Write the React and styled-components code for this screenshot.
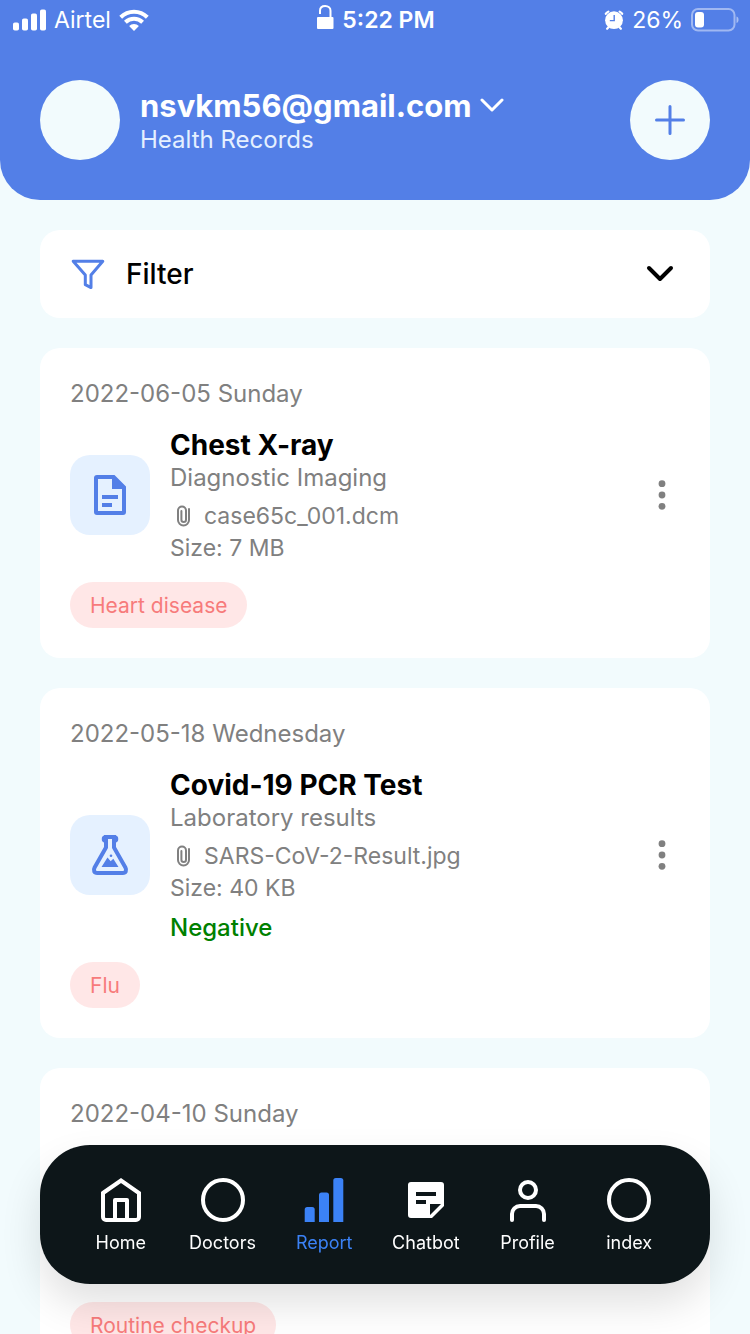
import React from 'react';
import styled, { createGlobalStyle } from 'styled-components';

const color = {
  primary: '#537fe7',
  active: '#3b82f6',
  page: '#f2fbfd',
  card: '#ffffff',
  muted: '#808080',
  iconTile: '#e5f1ff',
  tag: '#ffe7e7',
  tagText: '#f77b7b',
  positive: '#008000',
  nav: '#0d1619',
};

const GlobalStyle = createGlobalStyle`
  *, *::before, *::after { box-sizing: border-box; }
  body {
    margin: 0;
    background: ${color.page};
    font-family: Inter, "Liberation Sans", sans-serif;
    color: #000;
  }
  h1, h2, p { margin: 0; font: inherit; }
  button { border: 0; padding: 0; background: none; color: inherit; font: inherit; cursor: pointer; }
  svg { display: block; flex: none; }
`;

const Screen = styled.div`
  height: 100vh;
  display: flex;
  flex-direction: column;
  overflow: hidden;
`;

const Header = styled.header`
  flex: none;
  background: ${color.primary};
  color: #fff;
  border-radius: 0 0 40px 40px;
  padding-bottom: 40px;
`;

const StatusBar = styled.div`
  display: grid;
  grid-template-columns: 1fr auto 1fr;
  align-items: center;
  height: 40px;
  padding: 0 11px 0 13px;
  font-size: 23px;
  line-height: 40px;
`;

const StatusGroup = styled.div`
  display: flex;
  align-items: center;
  justify-content: ${(p) => p.$align || 'flex-start'};
  gap: 8px;
  font-weight: ${(p) => p.$weight || 400};
`;

const Account = styled.div`
  display: flex;
  align-items: center;
  gap: 20px;
  margin-top: 40px;
  padding: 0 40px;
`;

const Avatar = styled.div`
  flex: none;
  width: 80px;
  height: 80px;
  border-radius: 50%;
  background: ${color.page};
`;

const AccountText = styled.div`
  flex: 1;
  min-width: 0;
  padding-top: 4px;
`;

const AccountButton = styled.button`
  display: flex;
  align-items: center;
  gap: 8px;
  font-size: 31px;
  font-weight: 700;
  line-height: 36px;
`;

const AccountSection = styled.h1`
  font-size: 24px;
  line-height: 32px;
  color: #e5f0ff;
`;

const AddButton = styled.button`
  flex: none;
  display: grid;
  place-items: center;
  width: 80px;
  height: 80px;
  border-radius: 50%;
  background: ${color.page};
  color: ${color.primary};
`;

const Content = styled.main`
  flex: 1;
  min-height: 0;
  display: flex;
  flex-direction: column;
  gap: 30px;
  padding: 30px 40px 220px;
  overflow-y: auto;
  scrollbar-width: none;
`;

const FilterButton = styled.button`
  flex: none;
  display: flex;
  align-items: center;
  gap: 20px;
  height: 88px;
  padding: 0 30px;
  border-radius: 20px;
  background: ${color.card};
  font-size: 28px;
  font-weight: 500;
`;

const FilterLabel = styled.span`
  flex: 1;
  text-align: left;
`;

const Card = styled.article`
  flex: none;
  display: flex;
  flex-direction: column;
  gap: 16px;
  padding: 30px;
  border-radius: 20px;
  background: ${color.card};
`;

const CardDate = styled.p`
  font-size: 24px;
  line-height: 32px;
  color: ${color.muted};
`;

const CardBody = styled.div`
  display: flex;
  align-items: center;
  gap: 20px;
  min-height: 138px;
`;

const IconTile = styled.div`
  flex: none;
  display: grid;
  place-items: center;
  width: 80px;
  height: 80px;
  border-radius: 20px;
  background: ${color.iconTile};
  color: ${color.primary};
`;

const Details = styled.div`
  flex: 1;
  min-width: 0;
  color: ${color.muted};
`;

const Title = styled.h2`
  font-size: 28px;
  font-weight: 700;
  line-height: 38px;
  color: #000;
`;

const Category = styled.p`
  font-size: 24px;
  line-height: 28px;
  margin-bottom: 8px;
`;

const FileRow = styled.p`
  display: flex;
  align-items: center;
  gap: 8px;
  font-size: 23px;
  line-height: 32px;
`;

const Result = styled.p`
  margin-top: 8px;
  font-size: 24px;
  font-weight: 500;
  line-height: 32px;
  color: ${color.positive};
`;

const MenuButton = styled.button`
  flex: none;
  color: ${color.muted};
`;

const Tag = styled.span`
  align-self: flex-start;
  margin-top: 2px;
  padding: 1px 20px 0;
  border-radius: 23px;
  background: ${color.tag};
  color: ${color.tagText};
  font-size: 21px;
  line-height: 45px;
`;

const TabBar = styled.nav`
  position: fixed;
  left: 40px;
  right: 40px;
  bottom: 50px;
  display: flex;
  padding: 31px 30px 30px;
  border-radius: 50px;
  background: ${color.nav};
  box-shadow: 0 20px 40px rgba(0, 0, 0, 0.12);
`;

const Tab = styled.a`
  flex: 1 1 0;
  display: flex;
  flex-direction: column;
  align-items: center;
  gap: 8px;
  color: ${(p) => (p.$active ? color.active : '#fff')};
  font-size: 18px;
  line-height: 22px;
  text-decoration: none;
`;

const Stroke = ({ size = 48, width = 4, children, ...rest }) => (
  <svg width={size} height={size} viewBox={`0 0 ${size} ${size}`} fill="none" stroke="currentColor"
    strokeWidth={width} aria-hidden="true" {...rest}>{children}</svg>
);

const SignalIcon = () => (
  <svg width="33" height="22" viewBox="0 0 33 22" fill="currentColor" aria-hidden="true">
    <rect x="0" y="13.5" width="6" height="8" rx="1.8" />
    <rect x="9" y="9.5" width="6" height="12" rx="1.8" />
    <rect x="18" y="4.5" width="6" height="17" rx="1.8" />
    <rect x="27" y="0.5" width="6" height="21" rx="1.8" />
  </svg>
);

const WifiIcon = () => (
  <svg width="30" height="22" viewBox="0 0 30 22" fill="none" stroke="currentColor" strokeWidth="4" aria-hidden="true">
    <path d="M1.7 8.2a19 19 0 0 1 26.6 0" />
    <path d="M6.4 13.2a12.4 12.4 0 0 1 17.2 0" />
    <path d="M15 22l-4.9-4.9a7 7 0 0 1 9.8 0z" fill="currentColor" stroke="none" />
  </svg>
);

const LockIcon = () => (
  <svg width="17" height="30" viewBox="0 0 17 30" aria-hidden="true">
    <rect x="0" y="12" width="16.5" height="12" rx="1" fill="currentColor" />
    <path d="M3 9V5.700C3 2.800 5.200 1 8.200 1s5.300 1.800 5.300 4.700V13" fill="none" stroke="currentColor" strokeWidth="2" />
  </svg>
);

const AlarmIcon = () => (
  <svg width="20" height="21" viewBox="0 0 20 21" aria-hidden="true">
    <g fill="none" stroke="currentColor" strokeWidth="2.200" strokeLinecap="round">
      <path d="M1.800 3.800A9 9 0 0 1 4.400 1.600M18.200 3.800A9 9 0 0 0 15.600 1.600M4.800 17l-1.700 1.800M15.200 17l1.700 1.800" />
    </g>
    <circle cx="10" cy="10.200" r="8.900" fill="currentColor" />
    <path d="M10.200 5v5.600H5.800" fill="none" stroke={color.primary} strokeWidth="1.400" />
  </svg>
);

const BatteryIcon = () => (
  <svg width="48" height="24" viewBox="0 0 48 24" aria-hidden="true">
    <rect x="1" y="1" width="42.500" height="21.500" rx="6" fill="none" stroke="#fff" strokeOpacity="0.450" strokeWidth="2" />
    <path d="M45.500 8.500c1.600.6 2 1.800 2 3.300s-.4 2.700-2 3.300z" fill="#fff" fillOpacity="0.500" />
    <rect x="4" y="4" width="9" height="15.500" rx="3" fill="#fff" />
  </svg>
);

const AccountChevron = () => (
  <Stroke size={24} width={3} strokeLinecap="round" strokeLinejoin="round"><path d="M2 6l10 10L22 6" /></Stroke>
);

const PlusIcon = () => (
  <Stroke size={32} width={3} strokeLinecap="round"><path d="M16 2.500v27M2.500 16h27" /></Stroke>
);

const FilterIcon = () => (
  <Stroke size={36} width={3} color={color.primary} strokeLinejoin="round"><path d="M3.200 5.200h29.600L21 19v12.600l-5.700-2.900V19z" /></Stroke>
);

const FilterChevron = () => (
  <Stroke size={40} width={4} strokeLinecap="round" strokeLinejoin="round"><path d="M9 14l11 11 11-11" /></Stroke>
);

const DocumentIcon = () => (
  <svg width="48" height="48" viewBox="0 0 48 48" fill="currentColor" aria-hidden="true">
    <path fillRule="evenodd" d="M11 4h17.500L40 15.500V41a3 3 0 0 1-3 3H11a3 3 0 0 1-3-3V7a3 3 0 0 1 3-3zM12 8v32h24V18H26V8z" />
    <path d="M16 24h16v4H16zM16 32h10v4H16z" />
  </svg>
);

const FlaskIcon = () => (
  <Stroke strokeLinejoin="round">
    <path d="M20 8v8.500L8.600 36.500C7 39.500 8.200 42 11.200 42h25.600c3 0 4.200-2.500 2.600-5.500L28 16.500V8" />
    <path d="M20 8h-0.500M28 8h0.500" strokeWidth="7.500" strokeLinecap="round" />
    <path d="M18 6h12" />
    <path d="M22 8h4v8h-4z" fill={color.iconTile} stroke="none" />
    <path d="M15.500 36l6-9.500 3.200 3.800 2.600-2.600L32.500 36z" fill="currentColor" stroke="none" />
    <circle cx="25" cy="24.800" r="1.300" fill="currentColor" stroke="none" />
  </Stroke>
);

const ClipIcon = () => (
  <Stroke size={26} width={2} strokeLinecap="round">
    <path d="M19 6v11a5.500 5.500 0 0 1-11 0V7.500a4 4 0 0 1 8 0v9.300a2.300 2.300 0 0 1-4.600 0V8" />
  </Stroke>
);

const DotsIcon = () => (
  <svg width="36" height="36" viewBox="0 0 36 36" fill="currentColor" aria-hidden="true">
    <circle cx="18" cy="6.700" r="3.400" />
    <circle cx="18" cy="18" r="3.400" />
    <circle cx="18" cy="29.300" r="3.400" />
  </svg>
);

const HomeIcon = () => (
  <Stroke>
    <path d="M6 17L24 4.500 42 17v24a3 3 0 0 1-3 3H9a3 3 0 0 1-3-3z" />
    <path d="M18 44V24h12v20" strokeLinejoin="round" />
  </Stroke>
);

const CircleIcon = () => (
  <Stroke><circle cx="24" cy="24" r="20" /></Stroke>
);

const ReportIcon = () => (
  <svg width="48" height="48" viewBox="0 0 48 48" fill="currentColor" aria-hidden="true">
    <path d="M4.700 46V33.500a2.500 2.500 0 0 1 2.500-2.500h5a2.500 2.500 0 0 1 2.500 2.500V46z" />
    <path d="M19 46V19a2.500 2.500 0 0 1 2.500-2.500h5A2.500 2.500 0 0 1 29 19v27z" />
    <path d="M33.300 46V4.500a2.500 2.500 0 0 1 2.500-2.500h5a2.500 2.500 0 0 1 2.500 2.500V46z" />
  </svg>
);

const ChatbotIcon = () => (
  <svg width="48" height="48" viewBox="0 0 48 48" fill="currentColor" aria-hidden="true">
    <path fillRule="evenodd" d="M9 6h30a3 3 0 0 1 3 3v21L30 42H9a3 3 0 0 1-3-3V9a3 3 0 0 1 3-3zM14 16v4h20v-4zM14 24v4h10v-4zM28 28v11l11-11z" />
  </svg>
);

const ProfileIcon = () => (
  <Stroke strokeLinecap="round">
    <circle cx="24" cy="14" r="8" />
    <path d="M8 44V38a8 8 0 0 1 8-8h16a8 8 0 0 1 8 8v6" />
  </Stroke>
);

const records = [
  {
    date: '2022-06-05 Sunday',
    title: 'Chest X-ray',
    category: 'Diagnostic Imaging',
    file: 'case65c_001.dcm',
    size: '7 MB',
    tag: 'Heart disease',
    Icon: DocumentIcon,
  },
  {
    date: '2022-05-18 Wednesday',
    title: 'Covid-19 PCR Test',
    category: 'Laboratory results',
    file: 'SARS-CoV-2-Result.jpg',
    size: '40 KB',
    result: 'Negative',
    tag: 'Flu',
    Icon: FlaskIcon,
  },
  { date: '2022-04-10 Sunday', tag: 'Routine checkup' },
];

const tabs = [
  { label: 'Home', Icon: HomeIcon },
  { label: 'Doctors', Icon: CircleIcon },
  { label: 'Report', Icon: ReportIcon, active: true },
  { label: 'Chatbot', Icon: ChatbotIcon },
  { label: 'Profile', Icon: ProfileIcon },
  { label: 'index', Icon: CircleIcon },
];

function RecordCard({ date, title, category, file, size, result, tag, Icon }) {
  return (
    <Card>
      <CardDate>{date}</CardDate>
      <CardBody>
        {title && (
          <>
            <IconTile><Icon /></IconTile>
            <Details>
              <Title>{title}</Title>
              <Category>{category}</Category>
              <FileRow><ClipIcon />{file}</FileRow>
              <FileRow>Size: {size}</FileRow>
              {result && <Result>{result}</Result>}
            </Details>
            <MenuButton type="button" aria-label={`Options for ${title}`}><DotsIcon /></MenuButton>
          </>
        )}
      </CardBody>
      <Tag>{tag}</Tag>
    </Card>
  );
}

export default function App() {
  return (
    <Screen>
      <GlobalStyle />
      <Header>
        <StatusBar>
          <StatusGroup><SignalIcon />Airtel<WifiIcon /></StatusGroup>
          <StatusGroup $weight={600}><LockIcon />5:22 PM</StatusGroup>
          <StatusGroup $align="flex-end"><AlarmIcon />26%<BatteryIcon /></StatusGroup>
        </StatusBar>
        <Account>
          <Avatar />
          <AccountText>
            <AccountButton type="button">nsvkm56@gmail.com<AccountChevron /></AccountButton>
            <AccountSection>Health Records</AccountSection>
          </AccountText>
          <AddButton type="button" aria-label="Add record"><PlusIcon /></AddButton>
        </Account>
      </Header>
      <Content>
        <FilterButton type="button">
          <FilterIcon />
          <FilterLabel>Filter</FilterLabel>
          <FilterChevron />
        </FilterButton>
        {records.map((record) => <RecordCard key={record.date} {...record} />)}
      </Content>
      <TabBar>
        {tabs.map(({ label, Icon, active }) => (
          <Tab key={label} href={`#${label.toLowerCase()}`} $active={active} aria-current={active ? 'page' : undefined}>
            <Icon />
            {label}
          </Tab>
        ))}
      </TabBar>
    </Screen>
  );
}
